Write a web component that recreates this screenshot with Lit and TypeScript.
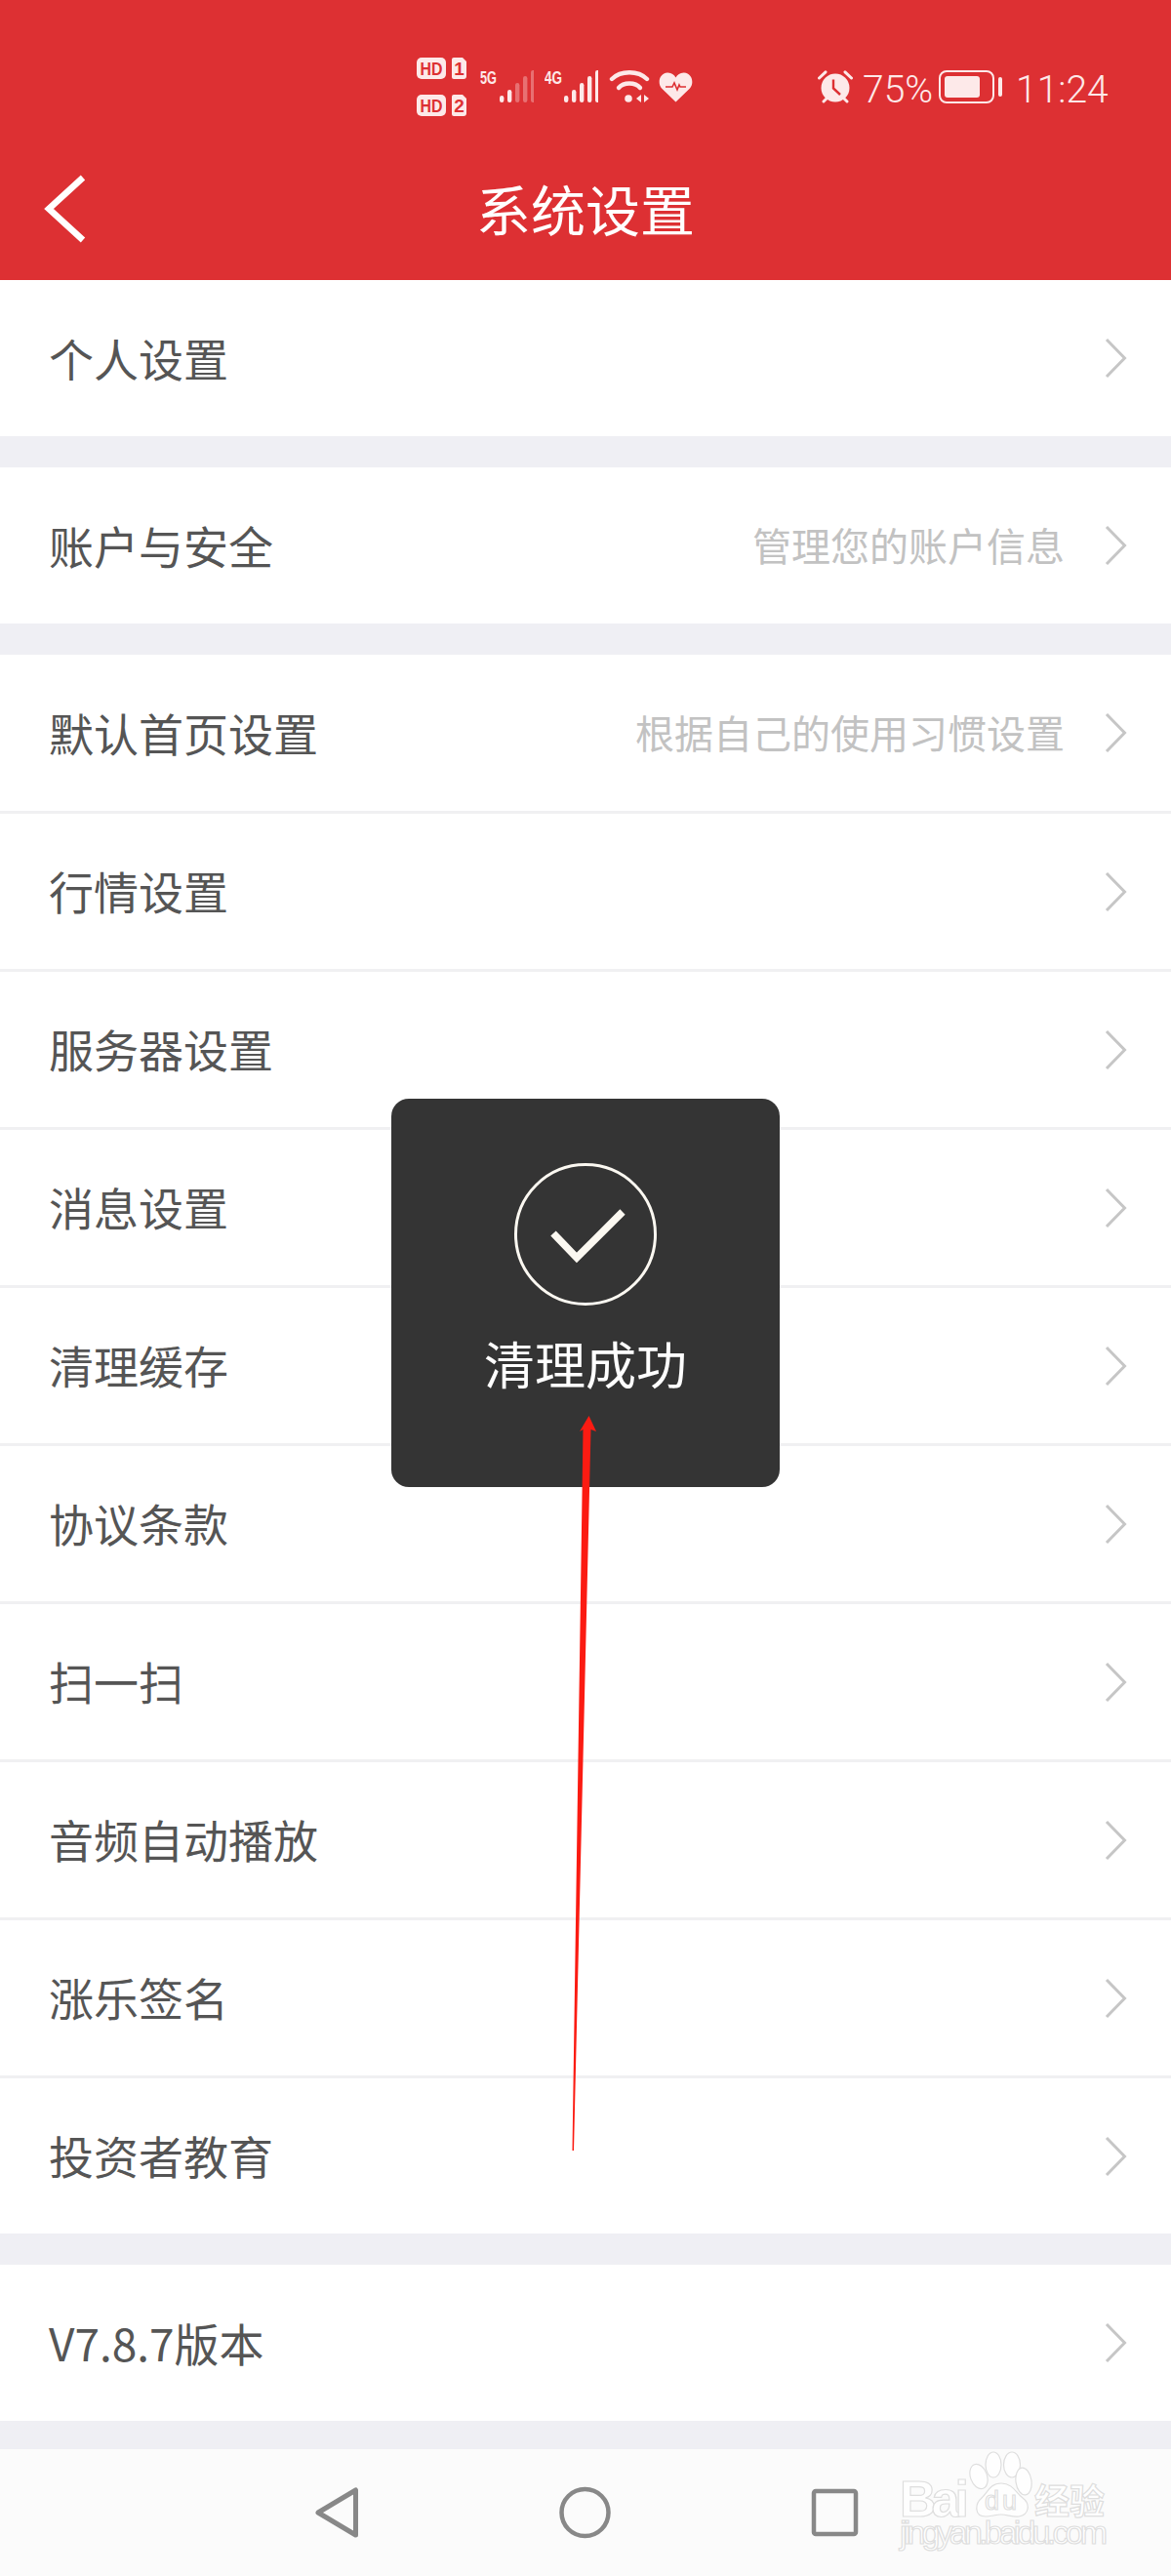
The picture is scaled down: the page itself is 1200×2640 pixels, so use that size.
import {css, html, LitElement, svg} from 'lit';
import {customElement} from 'lit/decorators.js';

interface Row {
  label: string;
  hint?: string;
}

const SECTIONS: Row[][] = [
  [{label: '个人设置'}],
  [{label: '账户与安全', hint: '管理您的账户信息'}],
  [
    {label: '默认首页设置', hint: '根据自己的使用习惯设置'},
    {label: '行情设置'},
    {label: '服务器设置'},
    {label: '消息设置'},
    {label: '清理缓存'},
    {label: '协议条款'},
    {label: '扫一扫'},
    {label: '音频自动播放'},
    {label: '涨乐签名'},
    {label: '投资者教育'},
  ],
  [{label: 'V7.8.7版本'}],
];

const RED = '#dd3033';
const ICON = '#fde9e9';
const BAR_TOPS = [26, 20, 13, 6, 0];

function signal(name: string, dimFrom: number, textWidth: number) {
  return html`<svg class="signal" width="55" height="46" viewBox="0 -6 55 46">
    <text x="0" y="14" class="net" textLength=${textWidth} lengthAdjust="spacingAndGlyphs">${name}</text>
    ${BAR_TOPS.map((top, i) => svg`<rect x=${20 + i * 8} y=${top} width="4.4" height=${33 - top}
      rx="2.2" fill=${ICON} opacity=${i >= dimFrom ? 0.35 : 1}></rect>`)}
  </svg>`;
}

function sim(y: number, n: string) {
  return svg`
    <rect x="0" y=${y} width="30" height="22" rx="5" fill=${ICON}></rect>
    <text x="3.5" y=${y + 17.5} class="hd" fill=${RED} textLength="23" lengthAdjust="spacingAndGlyphs">HD</text>
    <path d="M38 ${y}h9l4 4v15a3 3 0 0 1-3 3h-10a2 2 0 0 1-2-2v-18a2 2 0 0 1 2-2z" fill=${ICON}></path>
    <text x="43.5" y=${y + 17.5} text-anchor="middle" class="hd" fill=${RED}>${n}</text>`;
}

@customElement('app-root')
export class AppRoot extends LitElement {
  static styles = css`
    :host {
      position: relative;
      width: 1200px;
      height: 2640px;
      overflow: hidden;
      display: flex;
      flex-direction: column;
      background: #efeff4;
      font-family: "Noto Sans CJK SC", "Liberation Sans", sans-serif;
    }

    .header {
      background: #dd3033;
      height: 287px;
      padding-top: 54px;
      box-sizing: border-box;
      flex: none;
    }

    .status {
      display: flex;
      align-items: center;
      height: 70px;
      padding-left: 427px;
      color: #fde9e9;
      font-family: Roboto, "Liberation Sans", sans-serif;
      font-size: 39px;
      font-weight: 300;
    }

    .status svg {
      display: block;
      flex: none;
    }

    .status span {
      margin-top: 5px;
    }

    .net {
      font: bold 19px "Liberation Sans", sans-serif;
      fill: #fde9e9;
    }

    .hd {
      font: bold 19px "Liberation Sans", sans-serif;
    }

    .sim { margin-right: 14px; }
    .signal { margin-right: 11px; }
    .wifi { margin-right: 9px; }
    .heart { margin-right: 128px; }
    .alarm { margin-right: 10px; }
    .percent { width: 78px; }
    .battery { margin-right: 14px; }

    .title-row {
      display: grid;
      grid-template-columns: 1fr auto 1fr;
      align-items: center;
      height: 142px;
      margin-top: 21px;
    }

    .back {
      display: block;
      margin: 0 0 4px 45px;
    }

    .title {
      color: #fff;
      font-size: 56px;
      line-height: 135px;
      padding-bottom: 7px;
    }

    .section {
      background: #fff;
      margin-bottom: 32px;
      flex: none;
    }

    .row {
      display: flex;
      align-items: center;
      height: 160px;
      box-sizing: border-box;
      padding: 0 45px 0 50px;
    }

    .row + .row {
      height: 162px;
      border-top: 3px solid #f0f0f2;
    }

    .label {
      flex: 1;
      color: #555;
      font-size: 46px;
      line-height: 60px;
      margin-bottom: 3px;
      white-space: nowrap;
    }

    .hint {
      color: #c2c2c2;
      font-size: 40px;
      line-height: 60px;
      margin: 0 40px 3px 0;
      white-space: nowrap;
    }

    .nav {
      position: absolute;
      left: 0;
      right: 0;
      bottom: 0;
      height: 130px;
      background: #fbfbfb;
    }

    .nav-icons {
      display: block;
    }

    .watermark {
      position: absolute;
      left: 910px;
      top: 2505px;
    }

    .wm {
      fill: #fefefe;
      stroke: #dedede;
      stroke-width: 1.2;
      font-family: "Liberation Sans", sans-serif;
    }

    .toast {
      position: absolute;
      left: 401px;
      top: 1126px;
      width: 398px;
      height: 398px;
      border-radius: 18px;
      background: rgba(48, 48, 48, 0.98);
      display: flex;
      flex-direction: column;
      align-items: center;
      padding-top: 66px;
      box-sizing: border-box;
    }

    .toast-text {
      color: #fff;
      font-size: 52px;
      line-height: 70px;
      margin-top: 24px;
    }

    .arrow {
      position: absolute;
      left: 0;
      top: 0;
      pointer-events: none;
    }
  `;

  private renderStatus() {
    return html`<div class="status">
      <svg class="sim" width="51" height="60" viewBox="0 0 51 60">
        ${sim(0, '1')}${sim(38, '2')}
      </svg>
      ${signal('5G', 2, 17)}
      ${signal('4G', 5, 18)}
      <svg class="wifi" width="42" height="36" viewBox="0 0 42 36">
        <path d="M3 10C12 1 30 1 39 10" fill="none" stroke=${ICON} stroke-width="4.4" stroke-linecap="round"></path>
        <path d="M10 19C15 13 27 13 32 19" fill="none" stroke=${ICON} stroke-width="4.4" stroke-linecap="round"></path>
        <circle cx="20" cy="30" r="3.8" fill=${ICON}></circle>
        <path d="M33 26v8l-5-4zM36 26v8l5-4z" fill=${ICON}></path>
      </svg>
      <svg class="heart" width="35" height="31" viewBox="0 0 35 31">
        <path d="M17.5 30.5L3 16.5C-1.5 11.5 0.5 1 9 0.5C13 0.3 15.8 2.5 17.5 5.5C19.2 2.5 22 0.3 26 0.5C34.5 1 36.5 11.5 32 16.5Z" fill=${ICON}></path>
        <path d="M7 15h7l2-4 3 7 2-5 1 2h6" fill="none" stroke=${RED} stroke-width="1.6"></path>
      </svg>
      <svg class="alarm" width="36" height="34" viewBox="0 0 36 34">
        <circle cx="18" cy="18" r="14.5" fill=${ICON}></circle>
        <path d="M1.5 8L8 1.8M34.5 8L28 1.8M6 32l3-3M30 32l-3-3" stroke=${ICON} stroke-width="3" stroke-linecap="round"></path>
        <path d="M16 9.5V18.5L23 25" fill="none" stroke=${RED} stroke-width="2.4"></path>
      </svg>
      <span class="percent">75%</span>
      <svg class="battery" width="65" height="34" viewBox="0 0 65 34">
        <rect x="1" y="1" width="55" height="32" rx="7" fill="none" stroke=${ICON} stroke-width="2"></rect>
        <rect x="6" y="6" width="36" height="22" rx="3" fill=${ICON}></rect>
        <rect x="61" y="7" width="4" height="20" rx="2" fill=${ICON}></rect>
      </svg>
      <span>11:24</span>
    </div>`;
  }

  private renderRow(row: Row) {
    return html`<div class="row">
      <span class="label">${row.label}</span>
      ${row.hint ? html`<span class="hint">${row.hint}</span>` : ''}
      <svg width="24" height="42" viewBox="0 0 24 42">
        <path d="M3 2L21.5 21L3 40" fill="none" stroke="#c6c6c6" stroke-width="3"></path>
      </svg>
    </div>`;
  }

  private renderWatermark() {
    return html`<svg class="watermark" width="240" height="120" viewBox="0 0 240 120">
      <text class="wm" x="12" y="74" font-size="52" font-weight="bold" textLength="71">Bai</text>
      <ellipse class="wm" cx="108" cy="21" rx="8" ry="13"></ellipse>
      <ellipse class="wm" cx="127" cy="21" rx="8.5" ry="13"></ellipse>
      <ellipse class="wm" cx="93" cy="33" rx="8.5" ry="13" transform="rotate(-20 93 33)"></ellipse>
      <ellipse class="wm" cx="139" cy="38" rx="8" ry="14" transform="rotate(-8 139 38)"></ellipse>
      <path class="wm" d="M116 40C104 40 102 50 96 55C89 61 88 74 100 74C106 74 110 72 116 72C122 72 128 75 134 74C145 72 146 61 138 55C131 50 128 40 116 40Z"></path>
      <text class="wm" x="99" y="67" font-size="27" textLength="33">du</text>
      <text class="wm" x="150" y="72" font-size="36" font-weight="bold"
        style="font-family: 'Noto Sans CJK SC', sans-serif">经验</text>
      <text class="wm" x="12" y="102" font-size="34" textLength="213">jingyan.baidu.com</text>
    </svg>`;
  }

  render() {
    return html`
      <div class="header">
        ${this.renderStatus()}
        <div class="title-row">
          <svg class="back" width="44" height="70" viewBox="0 0 44 70">
            <path d="M40 3L5 35L40 67" fill="none" stroke="#fff" stroke-width="6.5"></path>
          </svg>
          <div class="title">系统设置</div>
        </div>
      </div>
      ${SECTIONS.map((rows) => html`<div class="section">
        ${rows.map((row) => this.renderRow(row))}
      </div>`)}
      <div class="nav">
        <svg class="nav-icons" width="1200" height="130" viewBox="0 2510 1200 130">
          <path d="M364.5 2552V2598L326 2575Z" fill="none" stroke="#888" stroke-width="5" stroke-linejoin="round"></path>
          <circle cx="599.5" cy="2575" r="24" fill="none" stroke="#888" stroke-width="4.5"></circle>
          <rect x="834" y="2553" width="43" height="44" rx="2" fill="none" stroke="#888" stroke-width="4.5"></rect>
        </svg>
      </div>
      ${this.renderWatermark()}
      <div class="toast">
        <svg width="146" height="146" viewBox="0 0 146 146">
          <circle cx="73" cy="73" r="71.5" fill="none" stroke="#fbf8f1" stroke-width="3"></circle>
          <path d="M40 72L64 97L111 50" fill="none" stroke="#fbf8f1" stroke-width="7.5"></path>
        </svg>
        <div class="toast-text">清理成功</div>
      </div>
      <svg class="arrow" width="1200" height="2640" viewBox="0 0 1200 2640">
        <path d="M603.5 1451L611 1467L605.5 1465L588 2204L586.5 2204L597.5 1465L594 1467Z" fill="#fb1b12"></path>
      </svg>
    `;
  }
}
